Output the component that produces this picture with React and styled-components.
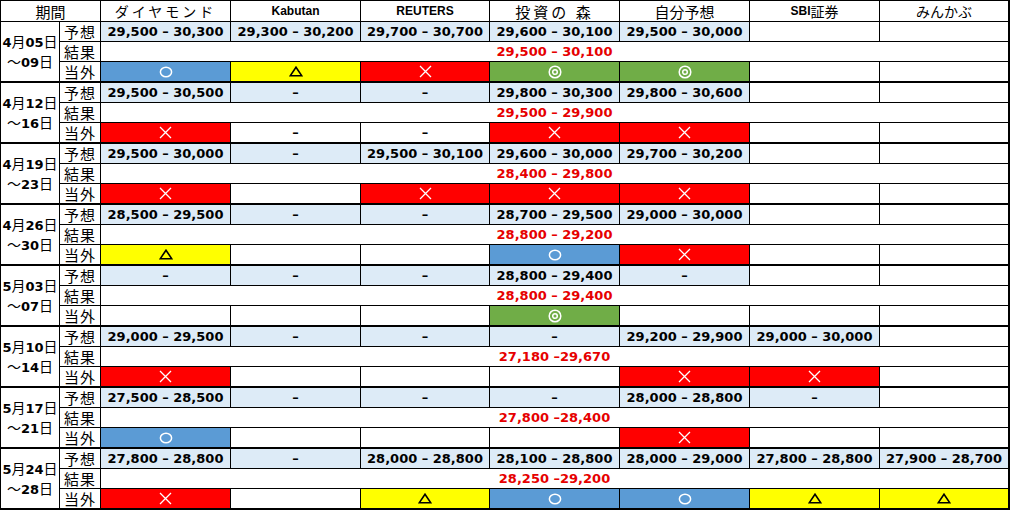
import React from 'react';
import styled, { createGlobalStyle } from 'styled-components';

const GlobalStyle = createGlobalStyle`
  body {
    margin: 0;
    background: #fff;
    font-family: "Noto Sans CJK JP", sans-serif;
    color: #000;
  }
`;

// column widths incl. right border
const WIDTHS = [59, 41, 130, 130, 129, 130, 130, 130, 130];

const MARK_BG = {
  o: '#5b9bd5',
  x: '#ff0000',
  t: '#ffff00',
  w: '#70ad47',
};

const weeks = [
  {
    month: '4', from: '05', to: '09',
    forecast: ['29,500 – 30,300', '29,300 – 30,200', '29,700 – 30,700', '29,600 – 30,100', '29,500 – 30,000', null, null],
    result: '29,500 – 30,100',
    marks: ['o', 't', 'x', 'w', 'w', null, null],
  },
  {
    month: '4', from: '12', to: '16',
    forecast: ['29,500 – 30,500', '-', '-', '29,800 – 30,300', '29,800 – 30,600', null, null],
    result: '29,500 – 29,900',
    marks: ['x', '-', '-', 'x', 'x', null, null],
  },
  {
    month: '4', from: '19', to: '23',
    forecast: ['29,500 – 30,000', '-', '29,500 – 30,100', '29,600 – 30,000', '29,700 – 30,200', null, null],
    result: '28,400 – 29,800',
    marks: ['x', null, 'x', 'x', 'x', null, null],
  },
  {
    month: '4', from: '26', to: '30',
    forecast: ['28,500 – 29,500', '-', '-', '28,700 – 29,500', '29,000 – 30,000', null, null],
    result: '28,800 – 29,200',
    marks: ['t', null, null, 'o', 'x', null, null],
  },
  {
    month: '5', from: '03', to: '07',
    forecast: ['-', '-', '-', '28,800 – 29,400', '-', null, null],
    result: '28,800 – 29,400',
    marks: [null, null, null, 'w', null, null, null],
  },
  {
    month: '5', from: '10', to: '14',
    forecast: ['29,000 – 29,500', '-', '-', '-', '29,200 – 29,900', '29,000 – 30,000', null],
    result: '27,180 –29,670',
    marks: ['x', null, null, null, 'x', 'x', null],
  },
  {
    month: '5', from: '17', to: '21',
    forecast: ['27,500 – 28,500', '-', '-', '-', '28,000 – 28,800', '-', null],
    result: '27,800 –28,400',
    marks: ['o', null, null, null, 'x', null, null],
  },
  {
    month: '5', from: '24', to: '28',
    forecast: ['27,800 – 28,800', '-', '28,000 – 28,800', '28,100 – 28,800', '28,000 – 29,000', '27,800 – 28,800', '27,900 – 28,700'],
    result: '28,250 –29,200',
    marks: ['x', null, 't', 'o', 'o', 't', 't'],
  },
];

const Mark = ({ type }) => {
  if (type === 'o') {
    return (
      <Icon width="14" height="12" viewBox="0 0 14 12">
        <ellipse cx="7" cy="6" rx="5.6" ry="4.8" fill="none" stroke="#fff" strokeWidth="1.5" />
      </Icon>
    );
  }
  if (type === 'w') {
    return (
      <Icon width="14" height="14" viewBox="0 0 14 14">
        <circle cx="7" cy="7" r="5.8" fill="none" stroke="#fff" strokeWidth="1.5" />
        <circle cx="7" cy="7" r="2.3" fill="none" stroke="#fff" strokeWidth="1.5" />
      </Icon>
    );
  }
  if (type === 'x') {
    return (
      <Icon width="13" height="13" viewBox="0 0 13 13">
        <path d="M1 1 L12 12 M12 1 L1 12" stroke="#fff" strokeWidth="1.3" />
      </Icon>
    );
  }
  if (type === 't') {
    return (
      <Icon width="14" height="11" viewBox="0 0 14 11">
        <path d="M7 1.2 L12.8 9.8 H1.2 Z" fill="none" stroke="#000" strokeWidth="1.6" />
      </Icon>
    );
  }
  if (type === '-') return <Num>–</Num>;
  return null;
};

// td with a fixed-height flex box inside, so fonts can't stretch the row
const Box = ({ as: Tag = Cell, h = 19, children, ...props }) => (
  <Tag {...props}>
    <Inner $h={h}>{children}</Inner>
  </Tag>
);

const Week = ({ week }) => (
  <>
    <tr>
      <DateCell rowSpan={3}>
        <DateLine>
          <Digit>{week.month}</Digit>月<Digit>{week.from}</Digit>日
        </DateLine>
        <DateLine>
          〜<Digit>{week.to}</Digit>日
        </DateLine>
      </DateCell>
      <Box as={LabelCell}>予想</Box>
      {week.forecast.map((f, i) => (
        <Box key={i} $bg={f ? '#ddebf7' : '#fff'}>
          {f && <Num>{f === '-' ? '–' : f}</Num>}
        </Box>
      ))}
    </tr>
    <tr>
      <Box as={LabelCell}>結果</Box>
      <Box colSpan={7}>
        <Num $red>{week.result}</Num>
      </Box>
    </tr>
    <tr>
      <Box as={LabelCell} $last>当外</Box>
      {week.marks.map((m, i) => (
        <Box key={i} $last $bg={MARK_BG[m] || '#fff'}>
          <Mark type={m} />
        </Box>
      ))}
    </tr>
  </>
);

const App = () => (
  <>
    <GlobalStyle />
    <Table>
      <colgroup>
        {WIDTHS.map((w, i) => (
          <col key={i} style={{ width: w }} />
        ))}
      </colgroup>
      <thead>
        <tr>
          <Box as={HeadCell} h={20} colSpan={2}>
            <Jp>期間</Jp>
          </Box>
          <Box as={HeadCell} h={20}>
            <Jp $spacing={3} $size={14}>ダイヤモンド</Jp>
          </Box>
          <Box as={HeadCell} h={20}>
            <Latin>Kabutan</Latin>
          </Box>
          <Box as={HeadCell} h={20}>
            <Latin>REUTERS</Latin>
          </Box>
          <Box as={HeadCell} h={20}>
            <Jp $spacing={3}>投資の 森</Jp>
          </Box>
          <Box as={HeadCell} h={20}>
            <Jp>自分予想</Jp>
          </Box>
          <Box as={HeadCell} h={20}>
            <Latin>SBI</Latin>
            <Jp $size={14}>証券</Jp>
          </Box>
          <Box as={HeadCell} h={20}>
            <Jp $size={14}>みんかぶ</Jp>
          </Box>
        </tr>
      </thead>
      <tbody>
        {weeks.map((w) => (
          <Week key={w.month + w.from} week={w} />
        ))}
      </tbody>
    </Table>
  </>
);

const Table = styled.table`
  border-collapse: separate;
  border-spacing: 0;
  table-layout: fixed;
  width: 1010px;
  border-top: 1px solid #000;
  border-left: 1px solid #000;
`;

const Cell = styled.td`
  box-sizing: border-box;
  padding: 0;
  background: ${(p) => p.$bg || '#fff'};
  border-right: 1px solid #000;
  border-bottom: ${(p) => (p.$last ? 2 : 1)}px solid #000;
  vertical-align: middle;
  white-space: nowrap;
  overflow: hidden;

  &:last-child {
    border-right-width: 2px;
  }
`;

const Inner = styled.div`
  display: flex;
  align-items: center;
  justify-content: center;
  height: ${(p) => p.$h}px;
  line-height: 1;
  overflow: hidden;
`;

const HeadCell = styled(Cell).attrs({ as: 'th' })`
  font-weight: 400;
`;

const LabelCell = styled(Cell)`
  font-size: 15px;
  letter-spacing: 1px;
`;

const DateCell = styled(Cell)`
  border-bottom-width: 2px;
  font-size: 14px;
  line-height: 19px;
  text-align: center;
`;

const DateLine = styled.div`
  white-space: nowrap;
`;

const Digit = styled.span`
  font-family: "DejaVu Sans", sans-serif;
  font-weight: 700;
  font-size: 13px;
`;

const Num = styled.span`
  font-family: "DejaVu Sans", sans-serif;
  font-weight: 700;
  font-size: 13px;
  color: ${(p) => (p.$red ? '#e60000' : '#000')};
`;

const Jp = styled.span`
  font-family: "Noto Sans CJK JP", sans-serif;
  font-size: ${(p) => p.$size || 15}px;
  letter-spacing: ${(p) => p.$spacing || 0}px;
`;

const Latin = styled.span`
  font-family: "Liberation Sans", Arial, sans-serif;
  font-weight: 700;
  font-size: 12px;
`;

const Icon = styled.svg`
  display: block;
`;

export default App;
